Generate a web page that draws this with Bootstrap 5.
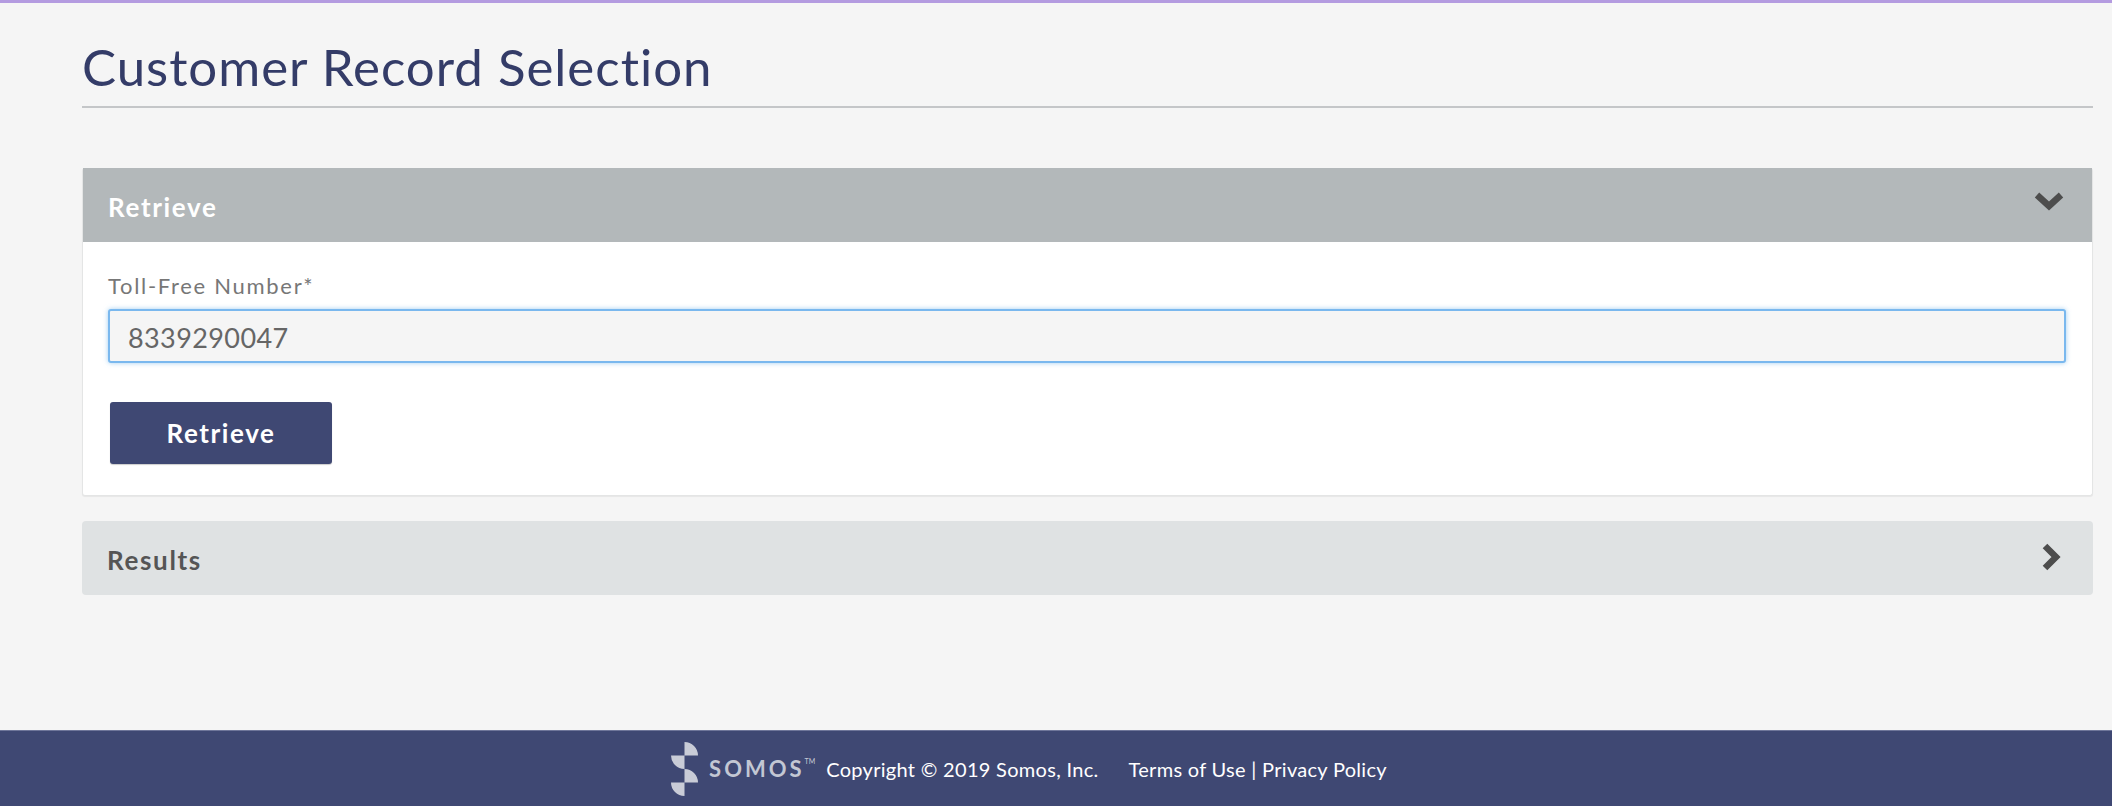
<!DOCTYPE html>
<html lang="en">
<head>
<meta charset="utf-8">
<title>Customer Record Selection</title>
<link rel="stylesheet" href="https://cdn.jsdelivr.net/npm/bootstrap@5.3.0/dist/css/bootstrap.min.css">
<style>
html,body{height:100%}
body{background:#f5f5f5;font-family:"Lato","Liberation Sans",sans-serif;font-variant-ligatures:none;color:#555;overflow:hidden}
.page-shell{height:806px;border-top:3px solid #b49be0}
.main-area{padding:0 19px 0 82px}
.page-title{font-size:51px;font-weight:400;line-height:56px;letter-spacing:1px;color:#343c68;margin:0;padding:36px 0 11px;border-bottom:2px solid #c4c6c8}
.panel-open{margin-top:60px;background:#fff;border:1px solid #e4e5e5;border-top:0;border-radius:3px;box-shadow:0 1px 1px rgba(0,0,0,.06)}
.panel-head{height:74px;padding:4px 24px 0 25px;font-size:26px;font-weight:700;letter-spacing:1.65px}
.head-dark{background:#b3b8ba;color:#fff}
.head-light{background:#dfe2e3;color:#555;border-radius:4px}
.panel-inner{padding:31px 26px 31px 25px}
.field-label{font-size:22px;line-height:26px;color:#777;margin:0 0 10px;letter-spacing:1.7px}
.field-box{height:54px;background:#f5f5f5;border:2px solid #7ab8ee;border-radius:3px;box-shadow:0 0 5px rgba(102,175,233,.6);font-size:27px;letter-spacing:.4px;color:#666;padding:3px 18px 0}
.field-box:focus{background:#f5f5f5;border-color:#7ab8ee;box-shadow:0 0 5px rgba(102,175,233,.6);color:#666}
.go-btn{width:222px;height:62px;margin:39px 0 0 2px;background:#3f4873;border:0;border-radius:3px;color:#fff;font-size:26px;font-weight:700;letter-spacing:1.6px;box-shadow:0 1px 1px rgba(0,0,0,.2)}
.go-btn:hover{background:#3f4873;color:#fff}
.panel-closed{margin-top:25px}
.chev-down{margin:0 3px 0 0;transform:translateY(-6px)}
.chev-right{margin:0 7px 0 0;transform:translateY(-3px)}
.foot-bar{height:76px;padding-right:54px;background:#3f4873;color:#fff;font-size:20px;letter-spacing:.3px;border-top:1px solid #6f769a}
.foot-bar a{color:#fff;text-decoration:none}
.logo-word{font-size:22px;font-weight:700;letter-spacing:3px;color:#c3c7d3;margin-left:11px;margin-right:11px}
.logo-tm{font-size:7px;font-weight:400;vertical-align:top;letter-spacing:0;position:relative;top:4px}
.terms-gap{margin-left:30px}
</style>
</head>
<body>
<div class="page-shell d-flex flex-column">
  <main class="main-area flex-grow-1">
    <h1 class="page-title">Customer Record Selection</h1>
    <section class="panel-open">
      <div class="panel-head head-dark d-flex align-items-center justify-content-between">
        <span>Retrieve</span>
        <svg class="chev-down" width="32" height="22" viewBox="0 0 32 22" aria-hidden="true"><path d="M4 5l12 11L28 5" fill="none" stroke="#4d4d4d" stroke-width="6.5"/></svg>
      </div>
      <div class="panel-inner">
        <label class="field-label d-block" for="tfn">Toll-Free Number*</label>
        <input id="tfn" class="form-control field-box" type="text" value="8339290047">
        <button class="btn go-btn" type="button">Retrieve</button>
      </div>
    </section>
    <section class="panel-closed">
      <div class="panel-head head-light d-flex align-items-center justify-content-between">
        <span>Results</span>
        <svg class="chev-right" width="22" height="32" viewBox="0 0 22 32" aria-hidden="true"><path d="M5 5l11 11L5 27" fill="none" stroke="#4d4d4d" stroke-width="6.5"/></svg>
      </div>
    </section>
  </main>
  <footer class="foot-bar d-flex align-items-center justify-content-center">
    <svg width="27" height="54" viewBox="0 0 27 54" aria-hidden="true">
      <path d="M13.5 0A13.5 13.5 0 0 1 27 13.5H13.5Z M0 13.5H13.5V27A13.5 13.5 0 0 1 0 13.5Z M13.5 27A13.5 13.5 0 0 1 27 40.5H13.5Z M0 40.5H13.5V54A13.5 13.5 0 0 1 0 40.5Z" fill="#c9ccd7"/>
    </svg>
    <span class="logo-word">SOMOS<span class="logo-tm">TM</span></span>
    <span>Copyright © 2019 Somos, Inc.</span>
    <span class="terms-gap"><a href="#">Terms of Use</a> | <a href="#">Privacy Policy</a></span>
  </footer>
</div>
<script src="https://cdn.jsdelivr.net/npm/bootstrap@5.3.0/dist/js/bootstrap.bundle.min.js"></script>
</body>
</html>
